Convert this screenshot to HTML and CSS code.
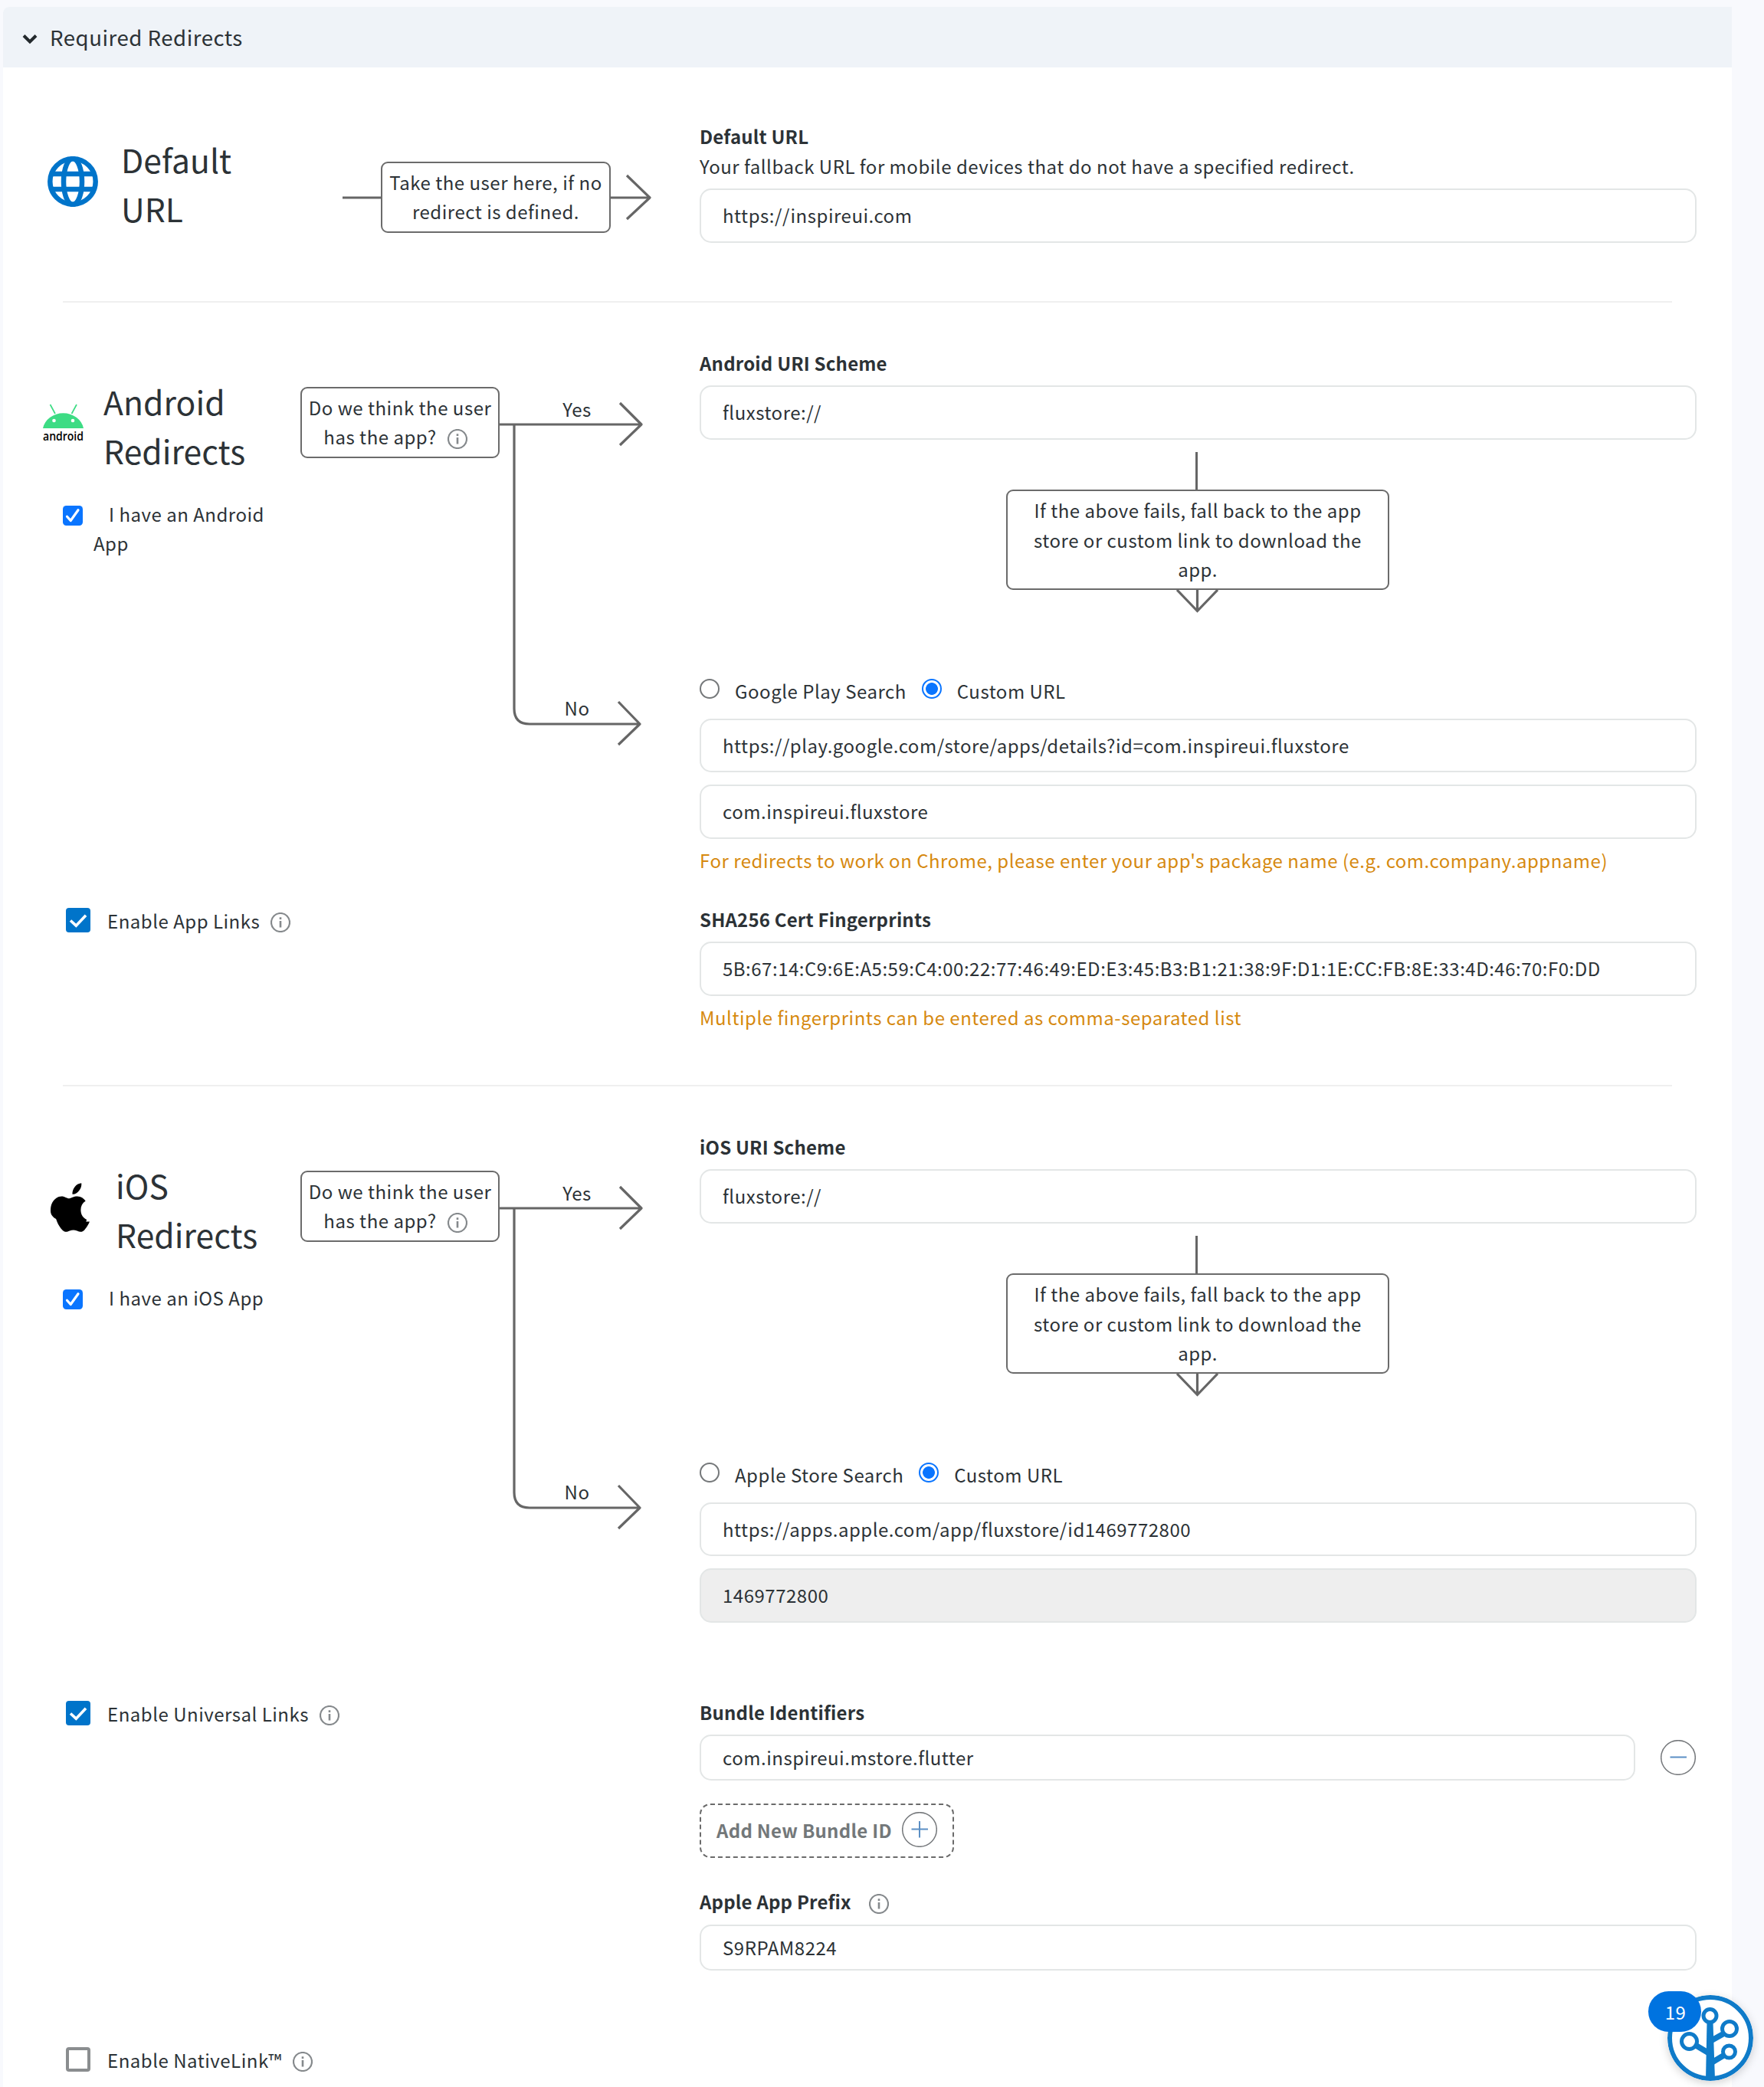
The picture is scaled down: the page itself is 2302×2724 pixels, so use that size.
FILE: index.html
```html
<!DOCTYPE html>
<html lang="en">
<head>
<meta charset="utf-8">
<title>Required Redirects</title>
<link rel="stylesheet" href="styles.css">
</head>
<body>
<svg class="defs" width="0" height="0" aria-hidden="true">
  <symbol id="info" viewBox="0 0 26 26">
    <circle cx="13" cy="13" r="12" fill="none" stroke="#85898c" stroke-width="2.200"/>
    <path d="M13 11v8.500M13 6.300v2.600" fill="none" stroke="#85898c" stroke-width="2.600"/>
  </symbol>
  <symbol id="check" viewBox="0 0 26 26">
    <rect width="26" height="26" rx="4.500" fill="#0a75ff"/>
    <path d="M5.500 14.200l4.700 5.300L20 5.800" fill="none" stroke="#fff" stroke-width="3.200" stroke-linecap="round" stroke-linejoin="round"/>
  </symbol>
  <symbol id="tick" viewBox="0 0 32 32">
    <rect width="32" height="32" rx="4" fill="#0074ca"/>
    <path d="M6 16.500l7.300 6.700L26 9.800" fill="none" stroke="#fff" stroke-width="3.600"/>
  </symbol>
  <symbol id="branch" viewBox="0 0 448 480">
    <path d="M260 49H445M417 21L445 49L417 76M279 49V420Q279 440 299 440H443M415 411L443 440L415 467" fill="none" stroke="#666" stroke-width="3.200" stroke-linejoin="round"/>
  </symbol>
  <symbol id="down" viewBox="0 0 58 30">
    <path d="M3 0L29.500 27.500L56 0M29.500 0V28" fill="none" stroke="#666" stroke-width="3.200"/>
  </symbol>
</svg>

<main class="panel">
  <header class="panel-head">
    <svg class="chevron" viewBox="0 0 20 14"><path d="M2 2.500L10 10.500L18 2.500" fill="none" stroke="#23292d" stroke-width="4"/></svg>
    <h1 class="panel-title">Required Redirects</h1>
  </header>

  <section class="section default">
    <div class="side">
      <div class="platform">
        <svg class="globe" viewBox="0 0 66 66">
          <g fill="none" stroke="#0074ca" stroke-width="6.500">
            <circle cx="33" cy="33" r="29.700"/>
            <ellipse cx="33" cy="33" rx="12" ry="30"/>
            <path d="M6 23H60M6 43H60"/>
          </g>
        </svg>
        <h2 class="platform-name">Default<br>URL</h2>
      </div>
    </div>
    <div class="flow">
      <svg class="straight" viewBox="0 0 404 64"><path d="M0 32H401M371 3L401 32L371 60" fill="none" stroke="#666" stroke-width="3.200" stroke-linejoin="round"/></svg>
      <div class="node node-wide">Take the user here, if no<br>redirect is defined.</div>
    </div>
    <div class="fields">
      <div class="label">Default URL</div>
      <div class="desc">Your fallback URL for mobile devices that do not have a specified redirect.</div>
      <div class="input">https://inspireui.com</div>
    </div>
  </section>

  <hr class="rule">

  <section class="section android">
    <div class="side">
      <div class="platform">
        <svg class="droid" viewBox="0 0 54 50">
          <path d="M0 31A27 24.500 0 0 1 53 31Z" fill="#3ddc84"/>
          <path d="M9.500 0L16 12M44 0L37.500 12" stroke="#3ddc84" stroke-width="1.700"/>
          <circle cx="14.500" cy="21" r="2.300" fill="#fff"/><circle cx="39" cy="21" r="2.300" fill="#fff"/>
          <text x="0" y="46.500" class="droid-word" textLength="53" lengthAdjust="spacingAndGlyphs">android</text>
        </svg>
        <h2 class="platform-name">Android<br>Redirects</h2>
      </div>
      <div class="have"><svg class="have-box"><use href="#check"/></svg><div class="have-text">I have an Android App</div></div>
      <div class="enable"><svg class="enable-box"><use href="#tick"/></svg><span>Enable App Links</span><svg class="info"><use href="#info"/></svg></div>
    </div>
    <div class="flow">
      <svg class="branch"><use href="#branch"/></svg>
      <div class="node node-ask">Do we think the user<br>has the app? <svg class="info"><use href="#info"/></svg></div>
      <span class="tag tag-yes">Yes</span>
      <span class="tag tag-no">No</span>
    </div>
    <div class="fields">
      <div class="label">Android URI Scheme</div>
      <div class="input">fluxstore://</div>
      <div class="fallback">
        <div class="stem"></div>
        <div class="fallback-box">If the above fails, fall back to the app<br>store or custom link to download the<br>app.</div>
        <svg class="down"><use href="#down"/></svg>
      </div>
      <div class="radios">
        <i class="radio"></i><span>Google Play Search</span>
        <i class="radio on"></i><span>Custom URL</span>
      </div>
      <div class="input first">https://play.google.com/store/apps/details?id=com.inspireui.fluxstore</div>
      <div class="input next">com.inspireui.fluxstore</div>
      <div class="hint">For redirects to work on Chrome, please enter your app's package name (e.g. com.company.appname)</div>
      <div class="label sha">SHA256 Cert Fingerprints</div>
      <div class="input fingerprint">5B:67:14:C9:6E:A5:59:C4:00:22:77:46:49:ED:E3:45:B3:B1:21:38:9F:D1:1E:CC:FB:8E:33:4D:46:70:F0:DD</div>
      <div class="hint">Multiple fingerprints can be entered as comma-separated list</div>
    </div>
  </section>

  <hr class="rule">

  <section class="section ios">
    <div class="side">
      <div class="platform">
        <svg class="apple" viewBox="0 36 153.500 172.500" preserveAspectRatio="none"><path d="M150.400 172.200c-2.500 5.700-5.400 10.900-8.800 15.700-4.600 6.600-8.400 11.100-11.300 13.600-4.500 4.200-9.400 6.300-14.600 6.400-3.700 0-8.200-1.100-13.400-3.200-5.200-2.100-10-3.200-14.400-3.200-4.600 0-9.500 1.100-14.800 3.200-5.300 2.100-9.500 3.300-12.800 3.400-5 .2-10-2-14.900-6.600-3.200-2.800-7.100-7.500-11.800-14.200-5.100-7.100-9.200-15.400-12.500-24.800C2.400 152.300 0 142.400 0 132.700c0-11 2.400-20.600 7.200-28.500 3.700-6.400 8.700-11.400 15-15.200 6.200-3.700 13-5.600 20.300-5.700 4 0 9.200 1.200 15.700 3.700 6.500 2.400 10.600 3.700 12.400 3.700 1.400 0 6-1.400 13.900-4.300 7.500-2.700 13.700-3.800 18.900-3.400 14 1.100 24.500 6.600 31.500 16.600-12.500 7.600-18.700 18.200-18.600 31.800.1 10.600 4 19.400 11.500 26.400 3.400 3.300 7.300 5.800 11.600 7.600-.9 2.300-1.900 4.600-3 6.800zM119.100 40c0 8.300-3 16.100-9.100 23.200-7.300 8.500-16.200 13.500-25.800 12.700-.1-1-.2-2-.2-3.200 0-8 3.500-16.500 9.600-23.500 3.100-3.500 7-6.500 11.700-8.900 4.700-2.300 9.200-3.600 13.300-3.800.1 1.100.5 2.300.5 3.500z"/></svg>
        <h2 class="platform-name">iOS<br>Redirects</h2>
      </div>
      <div class="have"><svg class="have-box"><use href="#check"/></svg><div class="have-text">I have an iOS App</div></div>
      <div class="enable"><svg class="enable-box"><use href="#tick"/></svg><span>Enable Universal Links</span><svg class="info"><use href="#info"/></svg></div>
      <div class="enable native"><i class="enable-box empty"></i><span>Enable NativeLink™</span><svg class="info"><use href="#info"/></svg></div>
    </div>
    <div class="flow">
      <svg class="branch"><use href="#branch"/></svg>
      <div class="node node-ask">Do we think the user<br>has the app? <svg class="info"><use href="#info"/></svg></div>
      <span class="tag tag-yes">Yes</span>
      <span class="tag tag-no">No</span>
    </div>
    <div class="fields">
      <div class="label">iOS URI Scheme</div>
      <div class="input">fluxstore://</div>
      <div class="fallback">
        <div class="stem"></div>
        <div class="fallback-box">If the above fails, fall back to the app<br>store or custom link to download the<br>app.</div>
        <svg class="down"><use href="#down"/></svg>
      </div>
      <div class="radios">
        <i class="radio"></i><span>Apple Store Search</span>
        <i class="radio on"></i><span>Custom URL</span>
      </div>
      <div class="input first">https://apps.apple.com/app/fluxstore/id1469772800</div>
      <div class="input next disabled">1469772800</div>
      <div class="label bundle">Bundle Identifiers</div>
      <div class="bundle-row">
        <div class="input short">com.inspireui.mstore.flutter</div>
        <svg class="round" viewBox="0 0 46 46"><circle cx="23" cy="23" r="22.300" fill="none" stroke="#75787b" stroke-width="1.500"/><path d="M12.500 22.500H34" stroke="#5b8fc4" stroke-width="2"/></svg>
      </div>
      <div class="add"><span class="add-text">Add New Bundle ID</span>
        <svg class="round" viewBox="0 0 46 46"><circle cx="23" cy="23" r="22.300" fill="none" stroke="#75787b" stroke-width="1.500"/><path d="M12.500 22.500H34M23 12V33.500" stroke="#5b8fc4" stroke-width="2"/></svg>
      </div>
      <div class="label prefix"><span>Apple App Prefix</span><svg class="info"><use href="#info"/></svg></div>
      <div class="input short">S9RPAM8224</div>
    </div>
  </section>
</main>

<aside class="helper">
  <svg class="helper-logo" viewBox="0 0 112 112">
    <circle cx="56" cy="56" r="53" fill="#fff" stroke="#0f7bc9" stroke-width="6"/>
    <g fill="none" stroke="#0f7bc9">
      <path d="M50 110L51.500 36H59.500L62 110Z" fill="#0f7bc9" stroke="none"/>
      <path d="M36 65L56 77M74 50L58 59M73 79L58 88" stroke-width="7.500"/>
      <g stroke-width="5" fill="#fff">
        <circle cx="55.500" cy="27" r="8.500"/><circle cx="81" cy="44" r="9.500"/>
        <circle cx="28.500" cy="60.500" r="10"/><circle cx="80.500" cy="74" r="8"/>
      </g>
    </g>
  </svg>
  <span class="helper-count">19</span>
</aside>
</body>
</html>
```
FILE: styles.css
```css
* { box-sizing: border-box; }

body {
  margin: 0;
  width: 2302px;
  height: 2724px;
  overflow: hidden;
  position: relative;
  padding: 9px 42px 0 4px;
  background: #f8f9fd;
  color: #2c3236;
  font-family: "Noto Sans CJK SC", "Noto Sans", sans-serif;
  font-size: 24px;
  line-height: 39px;
  letter-spacing: 0.510px;
}

svg { display: block; flex: none; }
.defs { position: absolute; }
h1, h2 { margin: 0; font-weight: 400; }

.panel { background: #fff; height: 2715px; border-top-left-radius: 8px; }
.panel-head {
  display: flex;
  align-items: center;
  height: 79px;
  padding-left: 25px;
  border-top-left-radius: 8px;
  background: #eff3f8;
}
.chevron { width: 20px; height: 14px; margin-top: 5px; }
.panel-title { margin: -2px 0 0 16px; font-size: 27.600px; line-height: 40px; }

.section { display: grid; grid-template-columns: 388px 521px 1301px; }
.default { height: 305px; }
.android { height: 1021px; }
.rule { width: 2100px; height: 2px; margin: 0 0 0 78px; border: 0; background: #efefef; }

.platform { display: flex; height: 128px; }
.platform-name { font-size: 42.600px; line-height: 64px; letter-spacing: 0.050px; }
.default .side { padding-top: 87px; }
.android .side, .ios .side { padding-top: 96px; }
.globe { width: 66px; height: 66px; margin: 29px 30px 0 58px; }
.droid { width: 54px; height: 50px; margin: 37px 25px 0 52px; overflow: visible; }
.droid-word { font-family: "Open Sans", sans-serif; font-size: 16px; font-weight: 600; letter-spacing: 0; }
.apple { width: 52px; height: 64px; margin: 30px 33px 0 62px; }
.platform-name { margin-top: 0.500px; }

.have { display: flex; height: 78px; margin-top: 33px; padding-left: 78px; line-height: 38px; }
.have-box { width: 26px; height: 26px; margin: 8px 14px 0 0; }
.have-text { width: 240px; text-indent: 20px; }
.enable { display: flex; margin-top: 452px; padding-left: 82px; white-space: nowrap; }
.enable-box { width: 32px; height: 32px; margin: 3px 22px 0 0; }
.enable .info { margin: 9px 0 0 14px; }
.ios .enable { margin-top: 464px; }
.ios .native { margin-top: 413px; }
.empty { border: 4px solid #8a8d8f; border-radius: 4px; flex: none; }
.info { width: 26px; height: 26px; }

.flow { position: relative; }
.straight { position: absolute; left: 55px; top: 138px; width: 404px; height: 64px; }
.branch { position: absolute; left: 0; top: 110px; width: 448px; height: 480px; }
.node {
  position: absolute;
  height: 93px;
  padding-top: 6px;
  border: 2px solid #6b6b6b;
  border-radius: 9px;
  background: #fff;
  text-align: center;
  white-space: nowrap;
  line-height: 38px;
}
.node-wide { left: 105px; top: 123px; width: 300px; }
.node-ask { left: 0; top: 110px; width: 260px; }
.node .info { display: inline-block; vertical-align: -6px; margin: 0 12px 0 8px; }
.tag { position: absolute; width: 60px; text-align: center; }
.tag-yes { left: 331px; top: 119px; }
.tag-no { left: 331px; top: 509px; }

.default .fields { padding-top: 70px; }
.android .fields, .ios .fields { padding-top: 59px; }
.label { font-weight: 700; letter-spacing: 0.190px; }
.input {
  height: 71px;
  margin-top: 10px;
  padding-left: 28px;
  border: 2px solid #e3e6e6;
  border-radius: 15px;
  line-height: 65px;
  white-space: nowrap;
}
.first { margin-top: 17px; height: 70px; line-height: 66px; }
.next { margin-top: 16px; }
.short { height: 60px; line-height: 56px; }
.disabled { background: #eee; border-color: #e3e6e6; }
.hint { margin-top: 8px; color: #d6890f; white-space: nowrap; }
.sha { margin-top: 38px; }

.fallback { display: flex; flex-direction: column; align-items: center; margin-top: 16px; padding-right: 1px; height: 210px; }
.stem { width: 3px; height: 50px; margin-right: 3px; background: #666; }
.fallback-box {
  width: 500px;
  height: 132px;
  padding-top: 6px;
  border: 2px solid #6b6b6b;
  border-radius: 9px;
  line-height: 38.500px;
  text-align: center;
}
.down { width: 58px; height: 30px; margin-right: 3px; }
.radios { display: flex; margin-top: 82px; }
.radio { width: 26px; height: 26px; margin: 4px 20px 0 0; border: 2px solid #75787a; border-radius: 50%; flex: none; }
.radio.on { margin-left: 20px; margin-right: 20px; border-color: #0a75ff; background: radial-gradient(circle, #0a75ff 7.500px, #fff 8.300px); }

.bundle { margin-top: 97px; }
.bundle-row { display: flex; align-items: center; justify-content: space-between; margin-top: 10px; }
.bundle-row .input { width: 1221px; margin: 0; }
.bundle-row .round { margin-right: 1px; }
.round { width: 46px; height: 46px; }
.add {
  display: flex;
  align-items: center;
  width: 332px;
  height: 71px;
  margin-top: 30px;
  padding-left: 20px;
  border: 2px dashed #6b6b6b;
  border-radius: 14px;
  color: #73787a;
  font-weight: 700;
  letter-spacing: 0.270px;
}
.add-text { margin-top: -2px; }
.add .round { margin: -4px 0 0 13px; }
.prefix { display: flex; margin-top: 37px; }
.prefix .info { margin: 10px 0 0 23px; }
.prefix + .input { margin-top: 11px; }

.helper { position: absolute; left: 2151px; top: 2599px; width: 140px; height: 120px; }
.helper-logo { position: absolute; left: 25px; top: 5px; width: 112px; height: 112px; border-radius: 50%; box-shadow: 0 3px 12px rgba(0, 0, 0, 0.18); }
.helper-count {
  position: absolute;
  left: 0;
  top: 0;
  width: 69px;
  height: 53px;
  border-radius: 27px;
  background: #0073e0;
  color: #fff;
  line-height: 54px;
  padding-left: 2px;
  text-align: center;
}
```
